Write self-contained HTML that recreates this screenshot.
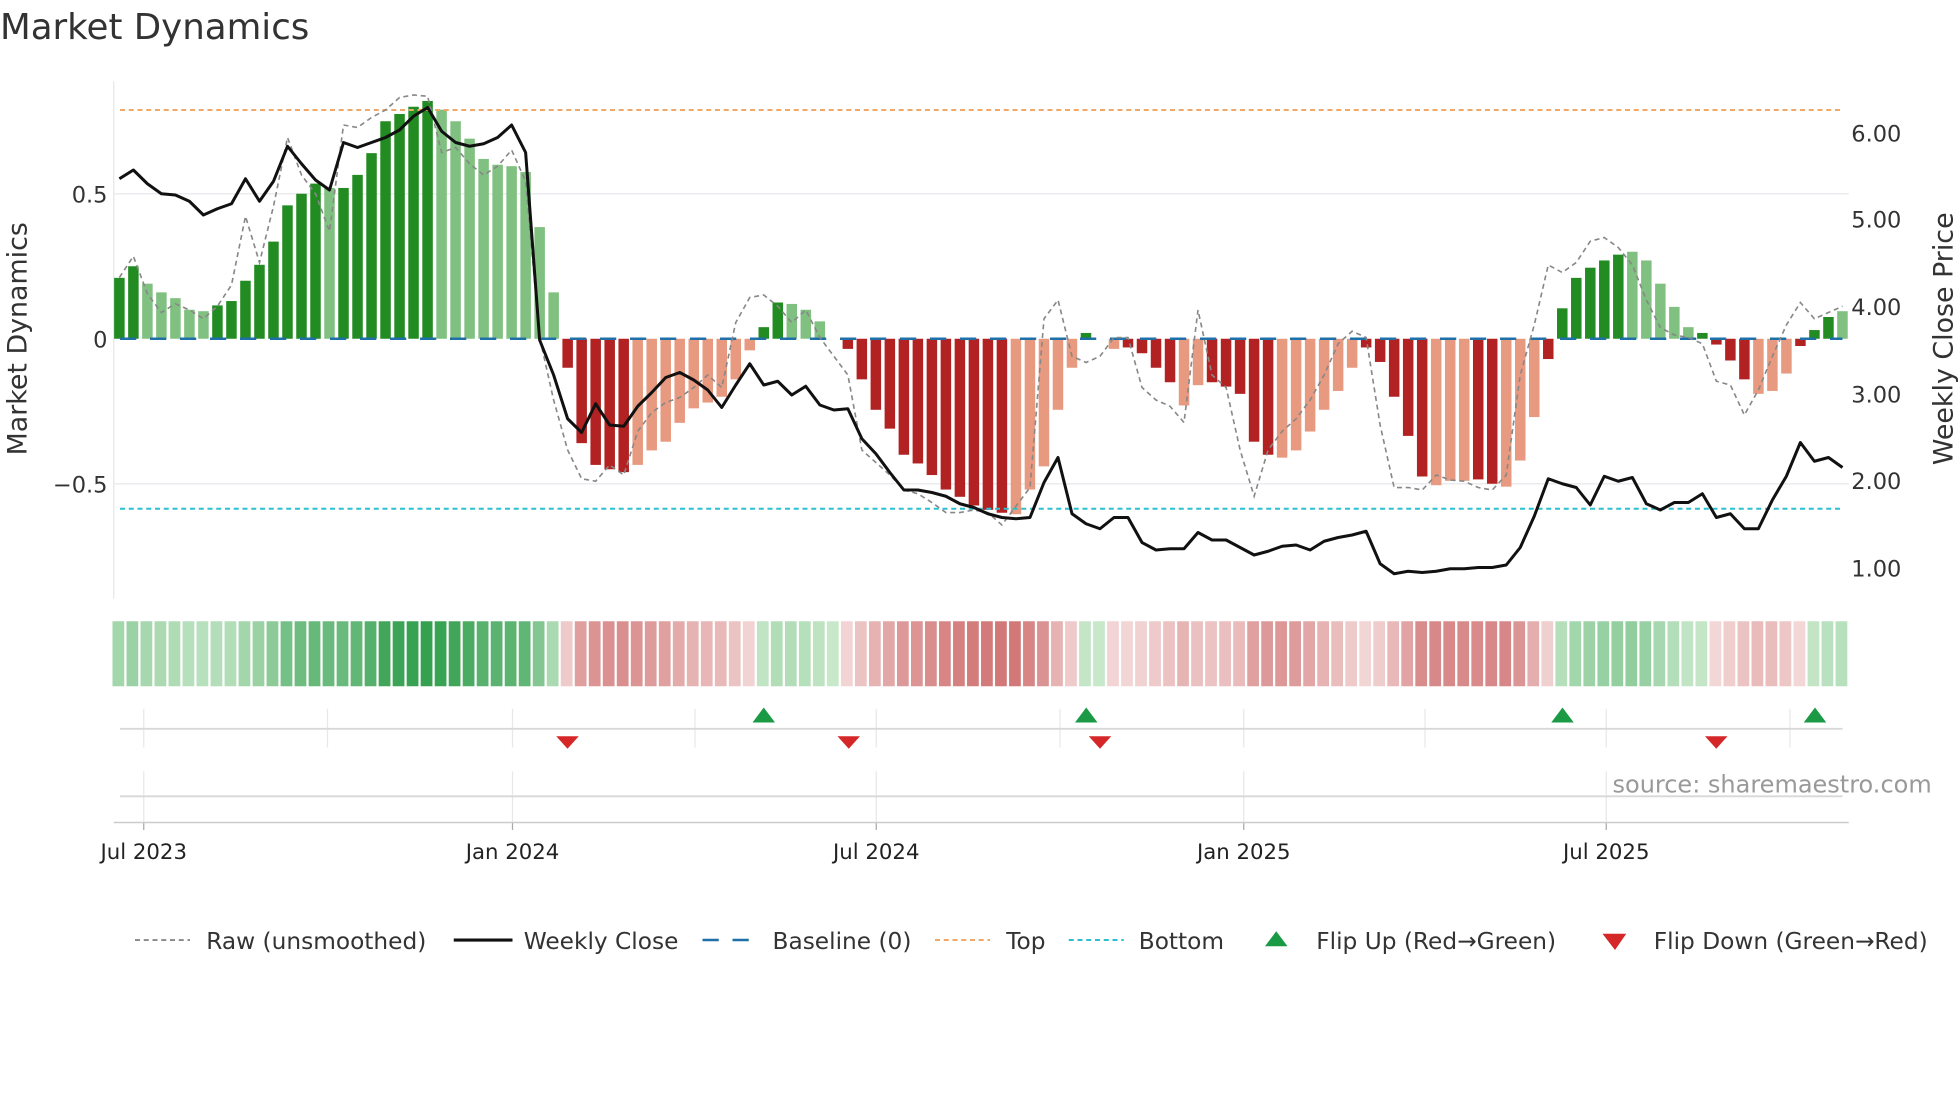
<!DOCTYPE html>
<html><head><meta charset="utf-8"><style>
html,body{margin:0;padding:0;background:#fff;width:1960px;height:1102px;overflow:hidden}
svg{display:block;font-family:"DejaVu Sans","Liberation Sans",sans-serif}
</style></head><body>
<svg id="s" width="1960" height="1102" viewBox="0 0 1568 881.6" xmlns="http://www.w3.org/2000/svg">
<text x="0" y="31" font-size="28.5" fill="#333">Market Dynamics</text>
<line x1="91" y1="65" x2="91" y2="479" stroke="#e6e6ea" stroke-width="1"/>
<line x1="91" y1="155" x2="1479" y2="155" stroke="#ebebf0" stroke-width="1.2"/>
<line x1="91" y1="387" x2="1479" y2="387" stroke="#ebebf0" stroke-width="1.2"/>
<g font-size="18" fill="#333" text-anchor="end">
<text x="86" y="162">0.5</text><text x="86" y="278">0</text><text x="86" y="394">−0.5</text></g>
<g font-size="18" fill="#333">
<text x="1481" y="113">6.00</text><text x="1481" y="182">5.00</text><text x="1481" y="252">4.00</text><text x="1481" y="322">3.00</text><text x="1481" y="391">2.00</text><text x="1481" y="461">1.00</text></g>
<text transform="translate(21,271) rotate(-90)" font-size="21.5" fill="#333" text-anchor="middle">Market Dynamics</text>
<text transform="translate(1562,271) rotate(-90)" font-size="21.5" fill="#333" text-anchor="middle">Weekly Close Price</text>
<g id="bars"></g>
<line x1="96" y1="88" x2="1474" y2="88" stroke="#f0a868" stroke-width="1.6" stroke-dasharray="4,3"/>
<line x1="96" y1="407" x2="1474" y2="407" stroke="#2bc0d0" stroke-width="1.6" stroke-dasharray="4,3"/>
<line x1="96" y1="271" x2="1474" y2="271" stroke="#1f6fa8" stroke-width="2" stroke-dasharray="13,11"/>
<polyline id="raw" fill="none" stroke="#888" stroke-width="1.3" stroke-dasharray="4,3"/>
<polyline id="cl" fill="none" stroke="#111" stroke-width="2.4" stroke-linejoin="round"/>
<g id="strip"></g>
<g stroke="#e8e8ec" stroke-width="1" id="vg"></g>
<line x1="96" y1="583" x2="1474" y2="583" stroke="#d8d8d8" stroke-width="1.5"/>
<line x1="96" y1="637" x2="1474" y2="637" stroke="#d8d8d8" stroke-width="1.5"/>
<line x1="91" y1="658" x2="1479" y2="658" stroke="#ccc" stroke-width="1.2"/>
<g id="mk"></g>
<text x="1290" y="634" font-size="19.2" fill="#999">source: sharemaestro.com</text>
<g font-size="17" fill="#222" text-anchor="middle">
<text x="115" y="687">Jul 2023</text><text x="410" y="687">Jan 2024</text><text x="701" y="687">Jul 2024</text><text x="995" y="687">Jan 2025</text><text x="1285" y="687">Jul 2025</text></g>
<g font-size="18.6" fill="#333">
<line x1="108" y1="752" x2="152" y2="752" stroke="#888" stroke-width="1.5" stroke-dasharray="4,3"/><text x="165" y="759">Raw (unsmoothed)</text>
<line x1="363" y1="752" x2="410" y2="752" stroke="#111" stroke-width="2.5"/><text x="419" y="759">Weekly Close</text>
<line x1="562" y1="752" x2="606" y2="752" stroke="#1f6fa8" stroke-width="2" stroke-dasharray="13,11"/><text x="618" y="759">Baseline (0)</text>
<line x1="748" y1="752" x2="792" y2="752" stroke="#f0a868" stroke-width="1.6" stroke-dasharray="4,3"/><text x="805" y="759">Top</text>
<line x1="855" y1="752" x2="899" y2="752" stroke="#2bc0d0" stroke-width="1.6" stroke-dasharray="4,3"/><text x="911" y="759">Bottom</text>
<polygon points="1012,757 1021,745 1030,757" fill="#1a9a45"/><text x="1053" y="759">Flip Up (Red→Green)</text>
<polygon points="1282,747 1301,747 1292,760" fill="#d62728"/><text x="1323" y="759">Flip Down (Green→Red)</text>
</g>
</svg>
<script>
var V=[.21,.25,.19,.16,.14,.10,.095,.115,.13,.20,.255,.335,.46,.50,.535,.52,.52,.565,.64,.75,.775,.80,.82,.79,.75,.69,.62,.60,.595,.575,.385,.16,
-.10,-.36,-.435,-.45,-.46,-.435,-.385,-.355,-.29,-.24,-.22,-.20,-.14,-.04,
.04,.125,.12,.10,.06,0,
-.035,-.14,-.245,-.31,-.40,-.43,-.47,-.52,-.545,-.575,-.59,-.60,-.605,-.52,-.44,-.245,-.10,
.02,0,-.035,-.03,-.05,-.10,-.15,-.23,-.16,-.15,-.165,-.19,-.355,-.40,-.41,-.385,-.32,-.245,-.18,-.10,-.03,
-.08,-.20,-.335,-.475,-.505,-.49,-.49,-.485,-.50,-.51,-.42,-.27,-.07,
.105,.21,.245,.27,.29,.30,.27,.19,.11,.04,.02,
-.02,-.075,-.14,-.19,-.18,-.12,-.025,.03,.075,.095];
var D="110000011111111011111110000000001111100000000011000011111111111100000110111100111110000001111100011000111111000001111000111";
var SP=11.207;
var ns="http://www.w3.org/2000/svg",b=document.getElementById('bars'),st=document.getElementById('strip');
function el(t,a,p){var e=document.createElementNS(ns,t);for(var k in a)e.setAttribute(k,a[k]);p.appendChild(e);return e;}
function mix(a,c,t){return 'rgb('+a.map(function(x,i){return Math.round(x+(c[i]-x)*t)}).join(',')+')';}
for(var i=0;i<V.length;i++){var v=V[i],x=95.5+SP*i,h=Math.abs(v)*232,d=D[i]=='1';
 var col=v>=0?(d?'#228b22':'#80c080'):(d?'#b22222':'#e89a80');
 if(h>0.5)el('rect',{x:x-4.2,y:v>=0?271-h:271,width:8.4,height:h,fill:col},b);
 var t=Math.min(1,Math.abs(v)/0.82);
 var c=v>=0?mix([200,232,202],[52,160,80],t):mix([244,218,218],[210,120,120],Math.min(1,Math.abs(v)/0.6));
 el('rect',{x:x-5.5,y:497,width:9.4,height:52,fill:c},st);}
var R=[222,205,235,250,243,248,255,245,228,173,210,165,110,140,155,185,100,102,94,88,78,76,77,122,118,131,140,133,120,145,270,320,360,383,385,372,380,345,330,322,318,310,300,310,258,238,236,245,258,248,270,285,300,360,370,380,392,395,402,410,410,408,410,420,405,390,255,240,285,290,285,270,270,310,320,325,338,248,300,310,360,397,360,345,335,320,300,275,265,270,340,390,390,392,380,384,385,390,392,380,300,260,212,218,210,193,190,198,212,240,262,268,270,275,305,308,332,312,285,260,242,255,250,245];
var C=[143,136,147,155,156,161,172,167,163,143,161,145,117,131,144,152,114,118,114,110,104,93,86,105,114,117,115,110,100,122,272,300,335,346,323,340,341,325,314,302,298,304,312,326,308,291,308,305,316,309,324,328,327,351,363,378,392,392,394,397,403,406,411,414,415,414,386,366,411,419,423,414,414,434,440,439,439,426,432,432,438,444,441,437,436,440,433,430,428,425,451,459,457,458,457,455,455,454,454,452,438,413,383,387,390,404,381,385,382,403,408,402,402,395,414,411,423,423,400,381,354,369,366,374];
function pts(a){return a.map(function(y,i){return (95.5+SP*i).toFixed(1)+','+y}).join(' ');}
document.getElementById('raw').setAttribute('points',pts(R));
document.getElementById('cl').setAttribute('points',pts(C));
var vg=document.getElementById('vg');
[115,262,410,556,701,848,995,1140,1285,1432].forEach(function(x){el('line',{x1:x,y1:567,x2:x,y2:598},vg);});
[115,410,701,995,1285].forEach(function(x){el('line',{x1:x,y1:617,x2:x,y2:658},vg);el('line',{x1:x,y1:658,x2:x,y2:664,stroke:'#aaa'},vg);});
var mk=document.getElementById('mk');
[611,869,1250,1452].forEach(function(x){el('polygon',{points:(x-9)+',578 '+x+',566 '+(x+9)+',578',fill:'#1a9a45'},mk);});
[454,679,880,1373].forEach(function(x){el('polygon',{points:(x-9)+',589 '+(x+9)+',589 '+x+',599',fill:'#d62728'},mk);});
</script>
</body></html>
